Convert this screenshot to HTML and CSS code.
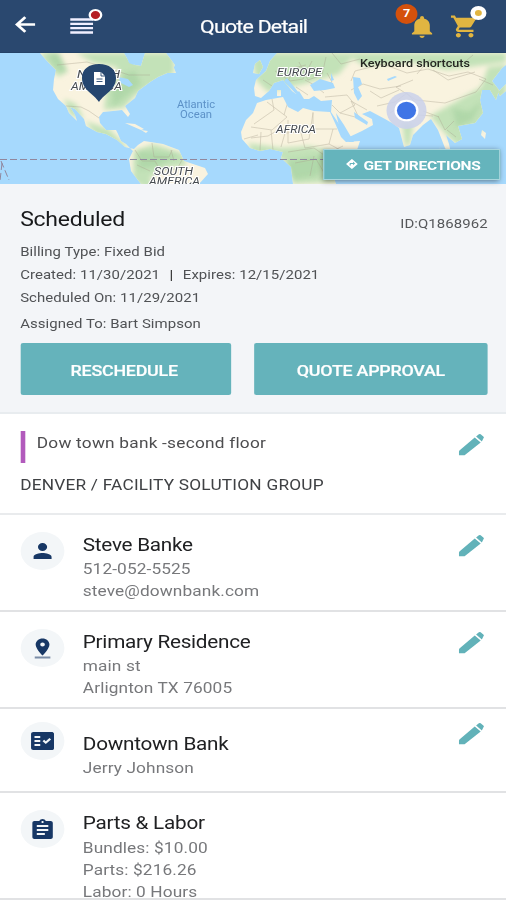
FILE: index.html
```
<!DOCTYPE html>
<html lang="en">
    <head>
        <meta charset="UTF-8">
        <meta name="viewport" content="width=device-width, initial-scale=1.0">
        <title>Quote Detail</title>
        <link rel="stylesheet" href="styles.css">
    </head>
    <body>
        <div class="screen">
            <!-- Header -->
            <header class="header">
                <svg class="back" viewBox="0 0 20 20"><path d="M19.500 10H2.500M10 1.800L2 10l8 8.200"/></svg>
                <div class="menu">
                    <svg viewBox="0 0 20 16" preserveAspectRatio="none"><path d="M0 1.500h20M0 5.800h20M0 10.100h20M0 14.500h20"/></svg>
                    <span class="menu-dot"></span>
                </div>
                <h1 class="title">Quote Detail</h1>
                <div class="bell">
                    <svg viewBox="4 2.500 16 19.500"><path d="M12 22c1.100 0 2-.9 2-2h-4c0 1.100.9 2 2 2zm6-6v-5c0-3.070-1.640-5.640-4.500-6.320V4c0-.83-.67-1.500-1.500-1.500s-1.500.67-1.500 1.500v.68C7.630 5.360 6 7.920 6 11v5l-2 2v1h16v-1l-2-2z"/></svg>
                    <span class="bell-count">7</span>
                </div>
                <div class="cart">
                    <svg viewBox="1 2 21 20"><path d="M7 18c-1.100 0-1.990.9-1.990 2S5.900 22 7 22s2-.9 2-2-.9-2-2-2zM1 2v2h2l3.600 7.590-1.350 2.450c-.16.28-.25.61-.25.960 0 1.100.9 2 2 2h12v-2H7.420c-.14 0-.25-.11-.25-.25l.03-.12.9-1.630h7.450c.75 0 1.410-.41 1.750-1.030l3.580-6.490A1 1 0 0 0 20 4H5.210l-.94-2H1zm16 16c-1.100 0-1.990.9-1.990 2s.89 2 1.990 2 2-.9 2-2-.9-2-2-2z"/></svg>
                    <span class="cart-dot"></span>
                </div>
            </header>

            <!-- Map -->
            <div class="map">
                <svg class="world" viewBox="0 0 506 131" preserveAspectRatio="none">
                    <defs>
                        <filter id="soft" x="-20%" y="-20%" width="140%" height="140%"><feGaussianBlur stdDeviation="2.500"/></filter>
                        <clipPath id="land">
                            <path d="M40 0L47 8 56 17 54 26 53 37 58 46 66 53 69 60 77 68 75 62 70 54 75 56 84 66 86 73 97 79 106 81 117 87 125 94 134 96 138 92 144 88 163 91 179 97 184 108 205 115 208 121 199 131H141L131 118 129 106 133 98 126 91 121 88 118 81 116 77 106 77 100 70 99 64 103 59 113 58 122 57 128 64 130 61 125 53 135 45 138 38 150 29 158 24 172 18 175 12 166 0H145L141 13 135 12 129 9 124 0Z"/>
                            <path d="M266 47L283 44 288 54 298 59 303 55 314 58 330 59 335 70 341 84 346 89 360 88 357 97 344 113 333 122 336 131H293L291 114 281 105 283 99 270 96 260 98 250 95 242 86 241 79 246 67 253 60 257 50Z"/>
                            <path d="M277 0L270 8 266 18 256 27 254 35 255 43 261 45 269 38 274 30 283 27 292 38 296 41 299 38 304 46 309 46 314 43 321 48 332 47 331 59 343 77 347 85 362 78 373 72 372 66 362 61 370 58 385 66 392 70 399 75 404 94 410 92 413 82 423 72 431 66 438 77 445 95 452 104 449 91 446 82 455 90 462 86 458 73 475 70 483 60 480 47 482 37 490 37 496 47 499 37 492 28 502 15 506 12V0Z"/>
                            <path d="M165 15h9l2 5-9 0zM125 70l10 1 9 5-3 1zM141 77l7 1-2 2zM253 20l2-9 5-4 3 7-4 7zM482 77l4 3-1 6-4-4zM439 94l16 22 6 4-8-2zM498 39l8-8v7l-6 5zM277 37l4 0 0 6-4 0z"/>
                        </clipPath>
                    </defs>
                    <rect width="506" height="131" fill="#a6d9fd"/>
                    <g clip-path="url(#land)">
                        <rect width="506" height="131" fill="#f9f3df"/>
                        <g filter="url(#soft)" fill="#c3e2b8">
                            <path d="M40 0h18l9 18-8 6-12-12zM76 0h98v20l-38 22-12 13-20 2 2-20 18-8-8-15-22-4zM64 46l12 5 8 15-14-4zM85 68l24 8 20 20-15-2-20-14z"/>
                            <path d="M134 98l20-7 30 10 2 12-22 2-14 10 5 15-22-12z"/>
                            <path d="M251 0h105l-17 21-31 9-40 9-12-12zM248 90l33 5 28-2 27 6 2 30-45 2-7-23-34-8zM345 0h161v9l-59 8-36-8-47 4zM430 63l25-14 26-15 7-20 18-2v30l-20 30-25 23-12-10zM402 69l11 3-3 20-5 1z"/>
                        </g>
                        <g fill="#8ac38b" opacity=".32" filter="url(#soft)">
                            <path d="M47 0h12l9 20-11-3zM111 25l24-7 6 13-28 23zM138 98l42 4-25 12-16 2zM285 108l47-7-15 22-24 4zM452 55l17 4 14-12-11 20-15 7z"/>
                        </g>
                        <!-- Borders -->
                        <g class="borders">
                            <path d="M66 53l15 1 8 4 10 7M57 12l30-3 24 7 18 6 21 0M135 97l7 11 13 0 5 9 17-1 5-9M152 90l2 14 15 0 3-7M171 97l3 11M137 112l13 6"/>
                            <path d="M254 71l20-14-2-11M267 49l20 15-15 13-21-3M251 85l17-2 12-7M284 62l5-17M288 67v23l21-4 4-26M313 59v17h24M301 80l4 15 24-4 4-15M281 94l4-14 17-1M288 99l26-4 10 7 19-9M314 103l-4 20M295 110l21-4 10 17M329 91l19 10M260 97l1-18M273 97l-2-20M244 86l14-4"/>
                            <path d="M263 27l12 8M275 18l15 10 13-2 9-18M288 29l5-14 13-3M299 9l9 18 14-5 4-18M305 27l15 8 12-6-5-9M296 34l12 8M314 32l10 8M325 44l22-2 8 10-15 8-8-8M340 60l19 5-8-17 16 9M351 37l12-6 17 5 21-3M351 28l4-10 28-7 24 9 21-4 21 7 19-4 18 7-10 13-31 11-29-3-20-13 17-7M370 38l11 7 18-8M377 53l18-4 12-9 11 13M390 60l14-9 13 11 16 1M423 58l16 6M438 63l7 14 9-9M447 77l9 7M479 26l14 6M332 0l9 11 19-5M417 21l12-14 31 6 13-11M433 17l15 10 27-8"/>
                        </g>
                    </g>
                    <g fill="#a6d9fd">
                        <path d="M310 32l10-6 13 4 2 5-10 2-11 1zM353 24l7 1 2 6-4 3 4 9-4 5-4-8zM336 60l8 12 10 17-5 0-10-16zM354 59l14 10-1 3-12-7zM118 24l10 2 5 6-4 2-8-4zM126 1l4-1 4 12-5-2zM287 25l12 15-3 1-12-13zM331 20l3 7-3 1zM387 26l8-3 2 1-9 4z"/>
                    </g>
                    <path class="equator" d="M0 106.500H330M1 108l8 19M2 110l-2 18"/>
                    <g class="continents">
                        <text x="77" y="25" textLength="43" lengthAdjust="spacingAndGlyphs">NORTH</text>
                        <text x="71" y="37" textLength="51" lengthAdjust="spacingAndGlyphs">AMERICA</text>
                        <text x="154" y="122" textLength="39" lengthAdjust="spacingAndGlyphs">SOUTH</text>
                        <text x="149" y="132" textLength="51" lengthAdjust="spacingAndGlyphs">AMERICA</text>
                        <text x="277" y="23" textLength="45" lengthAdjust="spacingAndGlyphs">EUROPE</text>
                        <text x="276" y="80" textLength="40" lengthAdjust="spacingAndGlyphs">AFRICA</text>
                    </g>
                    <g class="ocean">
                        <text x="177" y="55" textLength="38" lengthAdjust="spacingAndGlyphs">Atlantic</text>
                        <text x="180" y="65" textLength="32" lengthAdjust="spacingAndGlyphs">Ocean</text>
                    </g>
                    <text class="shortcuts" x="360" y="14" textLength="110" lengthAdjust="spacingAndGlyphs">Keyboard shortcuts</text>
                    <!-- Job pin -->
                    <path d="M99 49C94 41 82 37 82 25C82 16 89 11 99 11S116 16 116 25C116 37 104 41 99 49Z" fill="#25466f"/>
                    <path d="M94 19h7l4 4v9H94z" fill="#fff"/>
                    <path d="M101 19v4h4M96.500 26h6M96.500 28.500h6" fill="none" stroke="#25466f" stroke-width=".9"/>
                    <!-- Current location -->
                    <ellipse cx="406.500" cy="57.500" rx="20" ry="18.500" fill="#cbd1ea" opacity=".88"/>
                    <ellipse cx="406.500" cy="57.500" rx="12" ry="10.800" fill="#fff"/>
                    <ellipse cx="406.500" cy="57.500" rx="9.600" ry="8.700" fill="#3f75e6"/>
                </svg>
                <button class="directions">
                    <svg viewBox="0 0 24 24"><path fill="#fff" d="M21.710 11.290l-9-9a1 1 0 0 0-1.410 0l-9 9a1 1 0 0 0 0 1.410l9 9c.39.39 1.020.39 1.410 0l9-9a1 1 0 0 0 0-1.410zM14 14.500V12h-4v3H8v-4c0-.55.45-1 1-1h5V7.500l3.500 3.500-3.500 3.500z"/></svg>
                    GET DIRECTIONS
                </button>
            </div>

            <!-- Summary -->
            <section class="summary">
                <div class="summary-top">
                    <h2 class="status">Scheduled</h2>
                    <span class="quote-id">ID:Q1868962</span>
                </div>
                <p class="info info-billing">Billing Type: Fixed Bid</p>
                <p class="info info-created">Created: 11/30/2021 <span class="divider">|</span> Expires: 12/15/2021</p>
                <p class="info info-scheduled">Scheduled On: 11/29/2021</p>
                <p class="info info-assigned">Assigned To: Bart Simpson</p>
                <div class="buttons">
                    <button class="button button-reschedule">RESCHEDULE</button>
                    <button class="button button-approval">QUOTE APPROVAL</button>
                </div>
            </section>

            <!-- Site -->
            <section class="site">
                <div class="site-top">
                    <span class="site-bar"></span>
                    <p class="site-name">Dow town bank -second floor</p>
                    <svg class="edit" viewBox="0 0 22 23"><path d="M.5 17.500L13.800 4.600 19 9.600 5 22.300H.5q-.5 0-.5-.5v-3zM15 3.600l2.400-2.300q.8-.7 1.600 0l2.500 2.400q.7.700 0 1.400L20 8.400z"/></svg>
                </div>
                <p class="site-group">DENVER / FACILITY SOLUTION GROUP</p>
            </section>

            <!-- Contact -->
            <section class="row row-contact">
                <div class="circle">
                    <svg class="icon-person" viewBox="4 4 16 16"><path d="M12 12c2.210 0 4-1.790 4-4s-1.790-4-4-4-4 1.790-4 4 1.790 4 4 4zm0 2c-2.670 0-8 1.340-8 4v2h16v-2c0-2.660-5.330-4-8-4z"/></svg>
                </div>
                <div class="details">
                    <h3 class="name contact-name">Steve Banke</h3>
                    <p class="line phone">512-052-5525</p>
                    <p class="line email">steve@downbank.com</p>
                </div>
                <svg class="edit" viewBox="0 0 22 23"><path d="M.5 17.500L13.800 4.600 19 9.600 5 22.300H.5q-.5 0-.5-.5v-3zM15 3.600l2.400-2.300q.8-.7 1.600 0l2.500 2.400q.7.700 0 1.400L20 8.400z"/></svg>
            </section>

            <!-- Address -->
            <section class="row row-address">
                <div class="circle">
                    <svg class="icon-place" viewBox="5 2 14 20"><path d="M18 8c0-3.310-2.690-6-6-6S6 4.690 6 8c0 4.500 6 11 6 11s6-6.500 6-11zm-8 0c0-1.100.9-2 2-2s2 .9 2 2-.89 2-2 2c-1.100 0-2-.9-2-2z"/><path d="M5 20v2h14v-2H5z" opacity=".55"/></svg>
                </div>
                <div class="details">
                    <h3 class="name address-name">Primary Residence</h3>
                    <p class="line street">main st</p>
                    <p class="line city">Arlignton TX 76005</p>
                </div>
                <svg class="edit" viewBox="0 0 22 23"><path d="M.5 17.500L13.800 4.600 19 9.600 5 22.300H.5q-.5 0-.5-.5v-3zM15 3.600l2.400-2.300q.8-.7 1.600 0l2.500 2.400q.7.700 0 1.400L20 8.400z"/></svg>
            </section>

            <!-- Company -->
            <section class="row row-company">
                <div class="circle">
                    <svg class="icon-check" viewBox="2 3 20 18"><path fill-rule="evenodd" d="M20 3H4c-1.100 0-2 .9-2 2v14c0 1.100.9 2 2 2h16c1.100 0 2-.9 2-2V5c0-1.100-.9-2-2-2zM10 17H5v-2h5v2zm0-4H5v-2h5v2zm0-4H5V7h5v2zm4.820 6L12 12.160l1.410-1.410 1.410 1.420L17.990 9l1.420 1.420L14.820 15z"/></svg>
                </div>
                <div class="details">
                    <h3 class="name company-name">Downtown Bank</h3>
                    <p class="line person">Jerry Johnson</p>
                </div>
                <svg class="edit" viewBox="0 0 22 23"><path d="M.5 17.500L13.800 4.600 19 9.600 5 22.300H.5q-.5 0-.5-.5v-3zM15 3.600l2.400-2.300q.8-.7 1.600 0l2.500 2.400q.7.700 0 1.400L20 8.400z"/></svg>
            </section>

            <!-- Parts & Labor -->
            <section class="row row-parts">
                <div class="circle">
                    <svg class="icon-list" viewBox="3 1 18 20"><path fill-rule="evenodd" d="M19 3h-4.180C14.400 1.840 13.300 1 12 1s-2.400.84-2.820 2H5c-1.100 0-2 .9-2 2v14c0 1.100.9 2 2 2h14c1.100 0 2-.9 2-2V5c0-1.100-.9-2-2-2zm-7 0c.55 0 1 .45 1 1s-.45 1-1 1-1-.45-1-1 .45-1 1-1zm2 14H7v-2h7v2zm3-4H7v-2h10v2zm0-4H7V7h10v2z"/></svg>
                </div>
                <div class="details">
                    <h3 class="name parts-name">Parts &amp; Labor</h3>
                    <p class="line bundles">Bundles: $10.00</p>
                    <p class="line parts">Parts: $216.26</p>
                    <p class="line labor">Labor: 0 Hours</p>
                </div>
            </section>
        </div>
    </body>
</html>
```
FILE: styles.css
```
* {
    box-sizing: border-box;
}

body {
    margin: 0;
    height: 900px;
    overflow: hidden;
    background-color: white;
    font-family: Roboto, "Liberation Sans", sans-serif;
}

h1, h2, h3, p {
    margin: 0;
    font-weight: 400;
    white-space: nowrap;
}

svg {
    display: block;
}

button {
    font-family: inherit;
    padding: 0;
    border: 0;
}

.screen {
    width: 440px;
    height: 900px;
    overflow: hidden;
    transform: scaleX(1.15);
    transform-origin: left top;
}

/* Header */
.header {
    display: flex;
    height: 53px;
    padding-left: 13px;
    background-color: #2a486f;
    border-bottom: 1px solid #244267;
}

.back {
    width: 18px;
    height: 19px;
    margin-top: 15px;
    fill: none;
    stroke: white;
    stroke-width: 2.8;
}

.menu {
    position: relative;
    width: 20px;
    margin: 18px 0 0 30px;
}

.menu svg {
    width: 20px;
    height: 16px;
    stroke: #f1efff;
    stroke-width: 2.3;
}

.menu-dot {
    position: absolute;
    top: -9px;
    left: 16px;
    width: 12px;
    height: 12px;
    border: 2.5px solid white;
    border-radius: 50%;
    background-color: #b51f24;
}

.title {
    width: 94px;
    margin: 14px 0 0 93px;
    color: white;
    font-size: 18.5px;
    line-height: 26px;
    letter-spacing: -0.65px;
    -webkit-text-stroke: 0.2px white;
}

.bell {
    position: relative;
    margin: 16px 0 0 90px;
}

.bell svg {
    width: 18px;
    height: 22px;
    fill: #e1b541;
}

.bell-count {
    position: absolute;
    top: -12px;
    left: -14px;
    width: 19px;
    height: 20px;
    border-radius: 50%;
    background-color: #d4510c;
    color: white;
    font-size: 11px;
    font-weight: 700;
    line-height: 20px;
    text-align: center;
}

.cart {
    position: relative;
    margin: 15px 0 0 16px;
}

.cart svg {
    width: 23px;
    height: 23px;
    fill: #e1b541;
}

.cart-dot {
    position: absolute;
    top: -9px;
    left: 17px;
    width: 14px;
    height: 14px;
    border: 4.5px solid white;
    border-radius: 50%;
    background-color: #e1b541;
}

/* Map */
.map {
    position: relative;
    height: 131px;
}

.world {
    width: 440px;
    height: 131px;
}

.borders {
    fill: none;
    stroke: #aaa18e;
    stroke-width: 0.6;
    opacity: 0.65;
}

.equator {
    fill: none;
    stroke: #91879d;
    stroke-width: 1;
    stroke-dasharray: 7 3;
}

.continents {
    fill: #464b50;
    stroke: white;
    stroke-width: 2;
    paint-order: stroke;
    font-size: 11.5px;
    font-style: italic;
}

.ocean {
    fill: #5c91c7;
    font-size: 10.5px;
}

.shortcuts {
    fill: #252722;
    font-size: 11.5px;
    font-weight: 500;
}

.directions {
    position: absolute;
    top: 96px;
    left: 281px;
    display: flex;
    align-items: center;
    width: 154px;
    height: 31px;
    padding: 1px 0 0 18px;
    border: 1px solid #a9d6dd;
    background-color: #65b4bc;
    box-shadow: 0 1px 5px rgba(0, 0, 0, 0.45);
    color: white;
    font-size: 13.5px;
    font-weight: 700;
    letter-spacing: -0.25px;
    white-space: nowrap;
}

.directions svg {
    width: 12px;
    height: 14px;
    margin: -3px 4px 0 0;
}

/* Summary */
.summary {
    height: 230px;
    padding: 22px 16px 0 17.5px;
    border-bottom: 2px solid #e8ecef;
    background-color: #f3f5f8;
}

.summary-top {
    display: flex;
    justify-content: space-between;
}

.status {
    color: #18191b;
    font-size: 20px;
    line-height: 26px;
    letter-spacing: -0.2px;
}

.quote-id {
    margin-top: 9px;
    color: #56585b;
    font-size: 13px;
    line-height: 18px;
    letter-spacing: 0.05px;
}

.info {
    color: #505255;
    font-size: 13px;
    line-height: 18px;
    letter-spacing: 0.05px;
}

.info-billing {
    margin-top: 10px;
}

.info-created {
    margin-top: 5px;
}

.divider {
    margin: 0 5px;
    color: #222;
}

.info-scheduled {
    margin-top: 5px;
}

.info-assigned {
    margin-top: 8px;
}

.buttons {
    display: flex;
    justify-content: space-between;
    margin-top: 10px;
}

.button {
    height: 52px;
    padding-top: 3px;
    border-radius: 2px;
    background-color: #65b3bb;
    color: white;
    font-size: 15.5px;
    font-weight: 500;
    letter-spacing: -0.2px;
    -webkit-text-stroke: 0.2px white;
}

.button-reschedule {
    width: 183px;
    padding-right: 2px;
}

.button-approval {
    width: 203px;
}

/* Site */
.site {
    height: 101px;
    padding: 17px 19px 0 17.5px;
    border-bottom: 2px solid #e9ebed;
}

.site-top {
    display: flex;
}

.site-bar {
    width: 4.5px;
    height: 32px;
    background-color: #b25abc;
}

.site-name {
    margin-left: 10px;
    color: #4d4d4f;
    font-size: 15px;
    line-height: 24px;
    letter-spacing: 0.2px;
}

.site-group {
    margin-top: 10px;
    color: #3f4144;
    font-size: 15px;
    line-height: 24px;
    letter-spacing: 0.2px;
}

.edit {
    width: 22px;
    height: 23px;
    margin-left: auto;
    fill: #62b2b9;
}

.site .edit {
    margin-top: 2px;
}

/* Rows */
.row {
    display: flex;
    padding: 0 19px 0 17.5px;
    border-bottom: 2px solid #e1e2e4;
}

.circle {
    display: flex;
    flex-shrink: 0;
    align-items: center;
    justify-content: center;
    width: 38px;
    height: 38px;
    border-radius: 50%;
    background-color: #f3f6f8;
}

.circle svg {
    fill: #173765;
}

.details {
    margin-left: 16.5px;
}

.name {
    color: #202123;
    font-size: 18px;
    line-height: 24px;
    letter-spacing: -0.22px;
}

.line {
    color: #77787b;
    font-size: 15px;
    line-height: 22px;
    letter-spacing: 0.1px;
}

.name + .line {
    margin-top: 1px;
}

.row-contact {
    height: 97px;
    padding-top: 17px;
}

.row-contact .details {
    margin-top: 1px;
}

.row-contact .edit {
    margin-top: 2px;
}

.row-address {
    height: 97px;
    padding-top: 17px;
}

.row-address .details {
    margin-top: 1px;
}

.row-address .edit {
    margin-top: 2px;
}

.row-company {
    height: 84px;
    padding-top: 13px;
}

.row-company .details {
    margin-top: 10px;
}

.row-parts {
    height: 107px;
    padding-top: 17px;
}

.row-parts .details {
    margin-top: 1px;
}

.row-parts .name + .line {
    margin-top: 2px;
}

.icon-person {
    width: 16px;
    height: 16px;
}

.icon-place {
    width: 14px;
    height: 21px;
}

.icon-check {
    width: 20px;
    height: 18px;
}

.icon-list {
    width: 18px;
    height: 20px;
}
```
